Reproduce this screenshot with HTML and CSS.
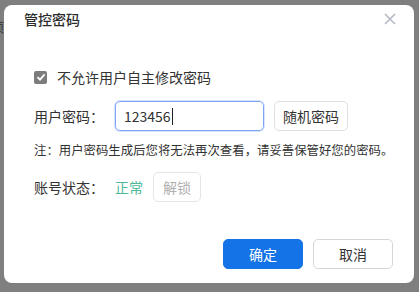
FILE: index.html
```html
<!DOCTYPE html>
<html>
<head>
    <title>管控密码</title>
    <link rel="stylesheet" href="styles.css">
</head>
<body>
    <div class="backdrop">
        <span class="behind behind-top">须</span>
        <span class="behind behind-mid">9</span>
    </div>
    <div class="dialog">
        <div class="dialog-header">
            <span class="dialog-title">管控密码</span>
            <svg class="close" width="12" height="12" viewBox="0 0 12 12">
                <path d="M1 1 L11 11 M11 1 L1 11" stroke="#b4bac4" stroke-width="1.6" fill="none"/>
            </svg>
        </div>
        <div class="dialog-body">
            <label class="check-row">
                <span class="checkbox">
                    <svg width="10" height="10" viewBox="0 0 10 10">
                        <path d="M1.5 5.2 L4 7.6 L8.6 2.4" stroke="#fff" stroke-width="1.8" fill="none"/>
                    </svg>
                </span>
                不允许用户自主修改密码
            </label>
            <div class="form-row">
                <span class="label">用户密码：</span>
                <div class="input">123456<span class="caret"></span></div>
                <button class="btn">随机密码</button>
            </div>
            <p class="note">注：用户密码生成后您将无法再次查看，请妥善保管好您的密码。</p>
            <div class="form-row status-row">
                <span class="label">账号状态：</span>
                <span class="status">正常</span>
                <button class="btn btn-disabled">解锁</button>
            </div>
        </div>
        <div class="dialog-footer">
            <button class="btn btn-primary">确定</button>
            <button class="btn btn-cancel">取消</button>
        </div>
    </div>
</body>
</html>
```

FILE: styles.css
```css
body {
    margin: 0;
    width: 419px;
    height: 292px;
    background: #7f7f7f;
    font-family: "Noto Sans CJK SC", "Noto Sans", sans-serif;
    color: #333;
    overflow: hidden;
    position: relative;
}
.backdrop {
    position: absolute;
    left: 0;
    top: 0;
    width: 419px;
    height: 292px;
}
.behind {
    position: absolute;
    left: -9px;
    font-size: 13px;
    color: #3a3a3a;
}
.behind-top {
    top: 17px;
}
.behind-mid {
    top: 174px;
}
.dialog {
    position: relative;
    margin: 5px 0 0 4px;
    width: 410px;
    height: 278px;
    background: #fff;
    border-radius: 8px;
    display: flex;
    flex-direction: column;
}
.dialog-header {
    display: flex;
    align-items: center;
    justify-content: space-between;
    height: 28px;
    padding: 0 18px 0 20px;
}
.dialog-title {
    font-size: 14px;
    font-weight: 500;
    color: #2b2b2b;
}
.dialog-body {
    padding: 0 0 0 30px;
    font-size: 14px;
}
.check-row {
    display: flex;
    align-items: center;
    height: 18px;
    margin-top: 35px;
    color: #333;
}
.checkbox {
    width: 13px;
    height: 13px;
    border-radius: 2px;
    background: #7c7c7c;
    display: flex;
    align-items: center;
    justify-content: center;
    margin-right: 10px;
}
.form-row {
    display: flex;
    align-items: center;
    margin-top: 15px;
}
.label {
    width: 81px;
}
.input {
    box-sizing: border-box;
    width: 149px;
    height: 30px;
    border: 1px solid #7fa5f2;
    border-radius: 5px;
    box-shadow: 0 0 0 1px #d5e3fc;
    padding: 0 0 0 8px;
    display: flex;
    align-items: center;
    font-size: 14px;
    color: #333;
}
.caret {
    display: inline-block;
    width: 1px;
    height: 17px;
    background: #222;
    margin-left: 1px;
}
.btn {
    box-sizing: border-box;
    height: 30px;
    padding: 0;
    border: 1px solid #dcdfe6;
    border-radius: 5px;
    background: #fff;
    color: #333;
    font-family: "Noto Sans CJK SC", "Noto Sans", sans-serif;
    font-size: 14px;
}
.form-row .btn {
    margin-left: 10px;
    width: 74px;
}
.note {
    margin: 10px 0 0 0;
    font-size: 12.4px;
    line-height: 18px;
    color: #333;
}
.status-row {
    margin-top: 13px;
}
.status {
    color: #4fb99a;
}
.status-row .btn-disabled {
    margin-left: 10px;
    width: 48px;
    color: #b0b0b0;
    border-color: #e6e6e6;
}
.dialog-footer {
    display: flex;
    justify-content: flex-end;
    gap: 10px;
    padding: 0 21px 0 0;
    margin-top: auto;
    margin-bottom: 14px;
}
.dialog-footer .btn {
    width: 80px;
}
.btn-primary {
    background: #1473e6;
    border-color: #1473e6;
    color: #fff;
}
.btn-cancel {
    border-color: #d4d6dc;
}
```
